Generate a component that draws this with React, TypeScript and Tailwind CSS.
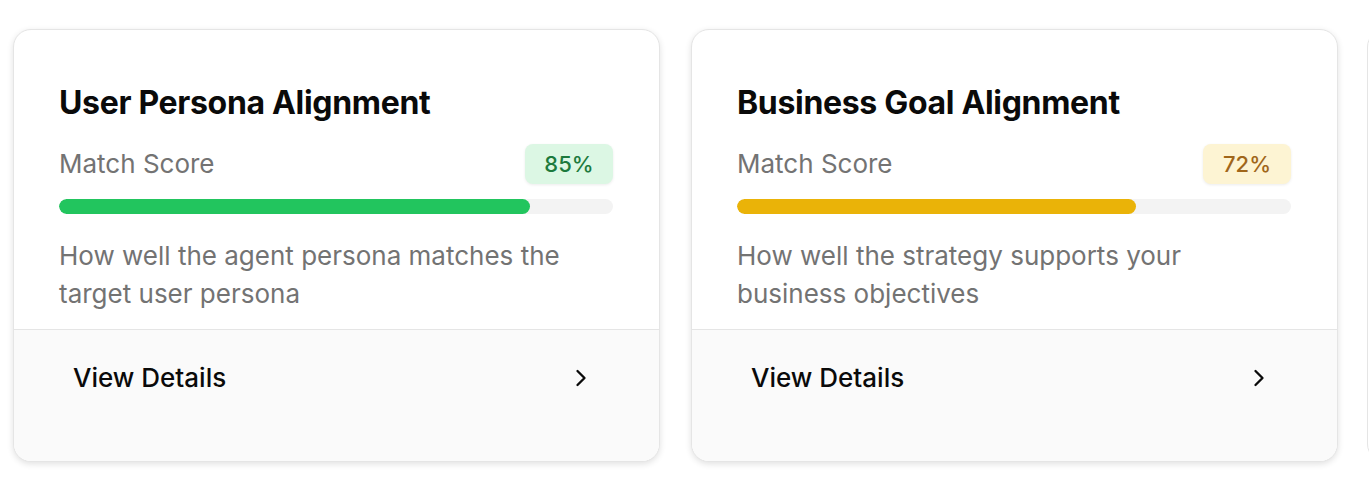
import { ChevronRight } from 'lucide-react';

interface Metric {
  title: string;
  score: number;
  description: string;
  tone: 'green' | 'yellow';
}

const metrics: Metric[] = [
  {
    title: 'User Persona Alignment',
    score: 85,
    description: 'How well the agent persona matches the target user persona',
    tone: 'green',
  },
  {
    title: 'Business Goal Alignment',
    score: 72,
    description: 'How well the strategy supports your business objectives',
    tone: 'yellow',
  },
];

function MetricCard({ metric }: { metric: Metric }) {
  const green = metric.tone === 'green';

  return (
    <div className="w-[647px] shrink-0 bg-white border border-neutral-200 rounded-[18px] shadow-[0_2px_6px_rgba(0,0,0,0.12)] overflow-hidden flex flex-col">
      {/* Body */}
      <div className="pl-[45px] pr-[46px] pt-[55px] pb-[16px]">
        <h3 className="text-[32px] leading-[36px] font-bold text-neutral-950 tracking-[-0.01em]">{metric.title}</h3>

        <div className="mt-[23px] flex items-center justify-between h-[40px]">
          <span className="text-[26px] leading-[32px] text-neutral-500">Match Score</span>
          <span
            className={`w-[88px] h-[40px] flex items-center justify-center rounded-lg text-[22px] font-medium shadow-[0_1px_3px_rgba(0,0,0,0.08)] ${
              green ? 'bg-[#dcf7e4] text-[#1c7a3d]' : 'bg-[#fdf4d3] text-[#a0661a]'
            }`}
          >
            {metric.score}%
          </span>
        </div>

        <div className="mt-[15px] h-[15px] rounded-full bg-[#f3f3f3] overflow-hidden">
          <div
            className={`h-full rounded-full ${green ? 'bg-[#22c55e]' : 'bg-[#eab308]'}`}
            style={{ width: `${metric.score}%` }}
          />
        </div>

        <p className="mt-[23px] text-[26px] leading-[38px] text-neutral-500">{metric.description}</p>
      </div>

      {/* Footer */}
      <div className="border-t border-neutral-200 bg-[#fafafa] pl-[45px] pr-[46px] pt-[20px] pb-[55px] flex-1">
        <button className="w-full flex items-center justify-between pl-[14px] pr-[18px] py-3 rounded-lg">
          <span className="text-[26px] leading-[32px] font-medium text-neutral-950">View Details</span>
          <ChevronRight size={28} strokeWidth={2} className="text-neutral-950" />
        </button>
      </div>
    </div>
  );
}

export default function App() {
  return (
    <div
      className="w-[1369px] h-[487px] bg-white overflow-hidden"
      style={{ fontFamily: 'Inter, "Noto Sans", sans-serif' }}
    >
      <div className="flex gap-[31px] pl-[13px] pt-[29px]">
        {metrics.map((m) => (
          <MetricCard key={m.title} metric={m} />
        ))}
        {/* next card, just peeking in at the right edge */}
        <div className="w-[647px] h-[433px] shrink-0 bg-white border border-neutral-200 rounded-[18px] -ml-[2px]" />
      </div>
    </div>
  );
}
